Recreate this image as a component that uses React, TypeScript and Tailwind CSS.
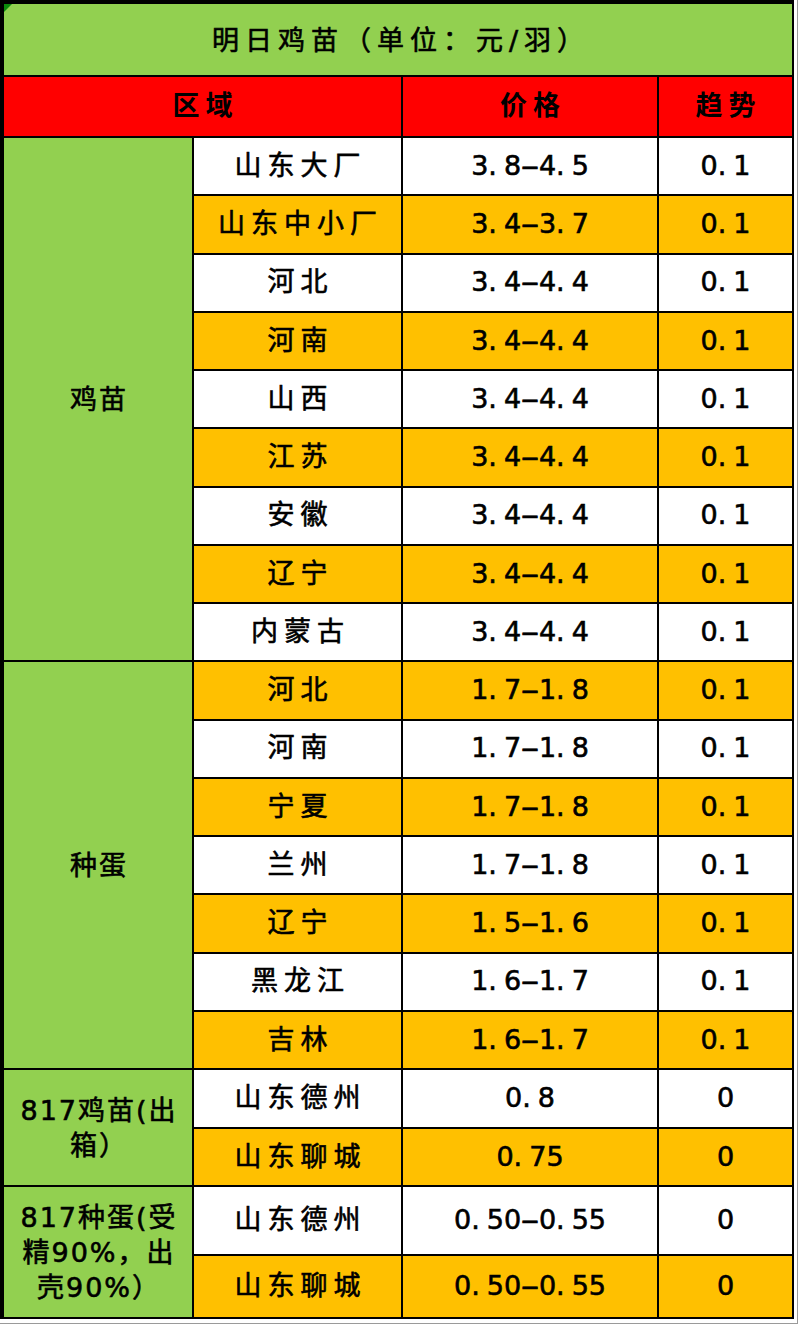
const groups = [
    {
        label: ['鸡苗'],
        span: 'row-span-9',
        rows: [
            ['山东大厂', '3.8-4.5', '0.1'],
            ['山东中小厂', '3.4-3.7', '0.1'],
            ['河北', '3.4-4.4', '0.1'],
            ['河南', '3.4-4.4', '0.1'],
            ['山西', '3.4-4.4', '0.1'],
            ['江苏', '3.4-4.4', '0.1'],
            ['安徽', '3.4-4.4', '0.1'],
            ['辽宁', '3.4-4.4', '0.1'],
            ['内蒙古', '3.4-4.4', '0.1'],
        ],
    },
    {
        label: ['种蛋'],
        span: 'row-span-7',
        rows: [
            ['河北', '1.7-1.8', '0.1'],
            ['河南', '1.7-1.8', '0.1'],
            ['宁夏', '1.7-1.8', '0.1'],
            ['兰州', '1.7-1.8', '0.1'],
            ['辽宁', '1.5-1.6', '0.1'],
            ['黑龙江', '1.6-1.7', '0.1'],
            ['吉林', '1.6-1.7', '0.1'],
        ],
    },
    {
        label: ['817鸡苗(出', '箱）'],
        span: 'row-span-2',
        rows: [
            ['山东德州', '0.8', '0'],
            ['山东聊城', '0.75', '0'],
        ],
    },
    {
        label: ['817种蛋(受', '精90%，出', '壳90%）'],
        span: 'row-span-2',
        rows: [
            ['山东德州', '0.50-0.55', '0'],
            ['山东聊城', '0.50-0.55', '0'],
        ],
    },
];

// the sheet's font gives the dot a wide cell and draws a long dash
const Num = ({ value }: { value: string }) => (
    <span className="inline-flex items-baseline">
        {value.split('').map((ch, i) => {
            if (ch === '.') return <span key={i} className="mr-[7px]">.</span>;
            if (ch === '-') return <span key={i} className="inline-block mx-[4px] scale-x-[2]">-</span>;
            return <span key={i}>{ch}</span>;
        })}
    </span>
);

const App = () => {
    let index = 0;

    return (
        <div className="w-[800px] h-[1327px] bg-white font-['DejaVu_Sans','Noto_Sans_CJK_SC',sans-serif] font-normal text-black [-webkit-text-stroke:0.6px_black]">
            <div className="w-[798px] h-[1324px] border-r border-b border-[#9a9a9a]">
                <div className="w-[794px] grid grid-cols-[188px_207px_254px_133px] grid-rows-[71px_59px_repeat(16,56.25px)_57px_56px_67px_61px] gap-[2px] bg-black border-l-4 border-t-4 border-r-2 border-b-2 border-black text-[27px]">

                    {/* Title */}
                    <div className="relative col-span-4 bg-[#92d050] flex items-center justify-center pt-1 pl-[6px] tracking-[6px]">
                        <svg className="absolute left-0 top-0" width="8" height="8" viewBox="0 0 8 8">
                            <polygon points="0,0 8,0 0,8" fill="#0b8a0b" />
                        </svg>
                        明日鸡苗（单位：元/羽）
                    </div>

                    {/* Header */}
                    <div className="col-span-2 bg-[#ff0000] flex items-center justify-center pl-[6px] tracking-[6px] font-bold [-webkit-text-stroke:0px]">区域</div>
                    <div className="bg-[#ff0000] flex items-center justify-center pl-[6px] tracking-[6px] font-bold [-webkit-text-stroke:0px]">价格</div>
                    <div className="bg-[#ff0000] flex items-center justify-center pl-[6px] tracking-[6px] font-bold [-webkit-text-stroke:0px]">趋势</div>

                    {groups.map((group) => (
                        <>
                            <div key={group.label[0]} className={`${group.span} bg-[#92d050] flex flex-col items-center justify-center leading-[35px] tracking-[2px] pl-[2px]`}>
                                {group.label.map((line) => (
                                    <span key={line}>{line}</span>
                                ))}
                            </div>
                            {group.rows.map((row) => {
                                const bg = index++ % 2 === 0 ? 'bg-white' : 'bg-[#ffc000]';
                                return (
                                    <>
                                        <div className={`${bg} flex items-center justify-center pl-[6px] tracking-[6px]`}>{row[0]}</div>
                                        <div className={`${bg} flex items-center justify-center`}><Num value={row[1]} /></div>
                                        <div className={`${bg} flex items-center justify-center`}><Num value={row[2]} /></div>
                                    </>
                                );
                            })}
                        </>
                    ))}
                </div>
            </div>
        </div>
    );
};

export default App;
